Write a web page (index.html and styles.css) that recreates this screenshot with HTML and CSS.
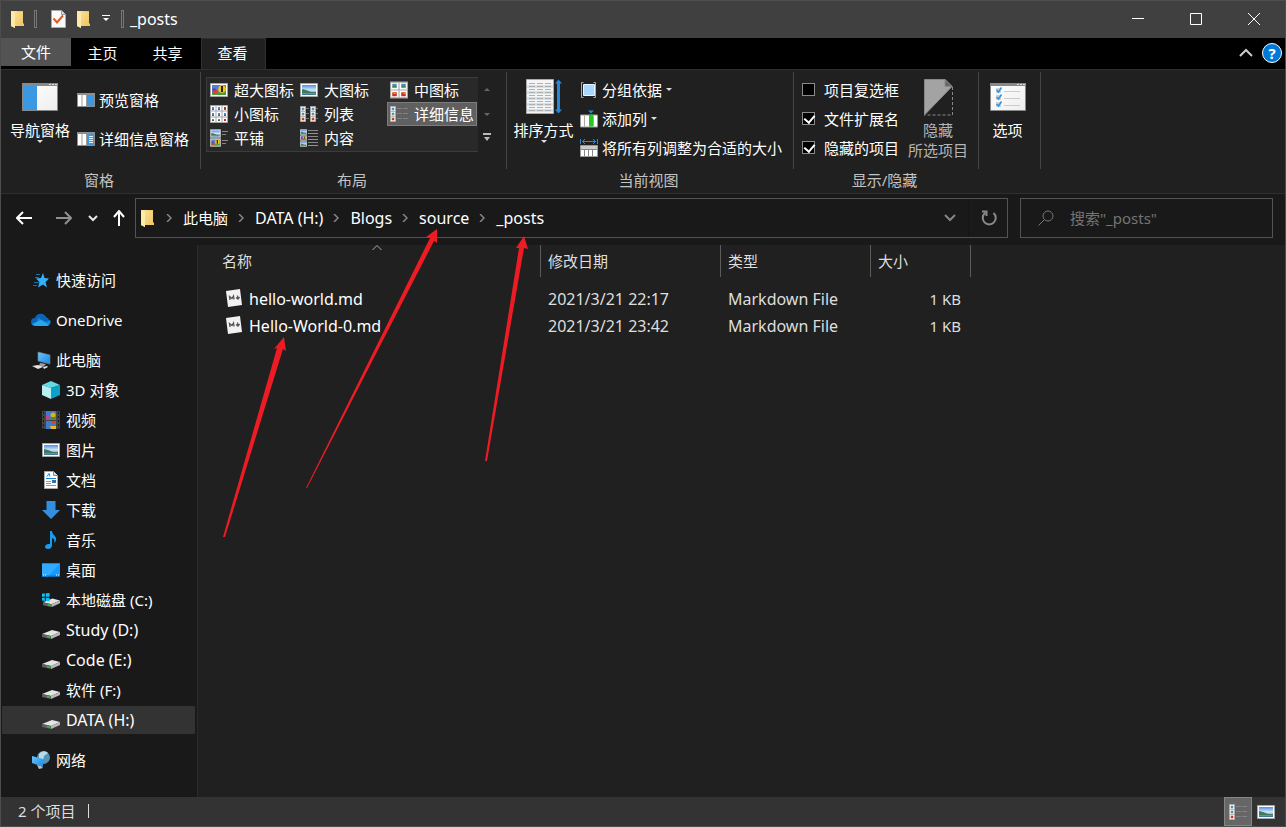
FILE: index.html
```html
<!DOCTYPE html>
<html lang="zh-CN">
<head>
<meta charset="utf-8">
<title>_posts</title>
<link rel="stylesheet" href="styles.css">
</head>
<body>
<svg class="sprite" aria-hidden="true">
  <defs>
    <linearGradient id="g-fold" x1="0" y1="0" x2="1" y2="1"><stop offset="0" stop-color="#fbe6a2"/><stop offset="1" stop-color="#efc25c"/></linearGradient>
    <linearGradient id="g-blue" x1="0" y1="0" x2="1" y2="1"><stop offset="0" stop-color="#6dc4fb"/><stop offset="1" stop-color="#168ae6"/></linearGradient>
    <linearGradient id="g-pic" x1="0" y1="0" x2="0" y2="1"><stop offset="0" stop-color="#4f8fe8"/><stop offset=".5" stop-color="#cfe8f5"/><stop offset="1" stop-color="#2f6f8c"/></linearGradient>
    <linearGradient id="g-paper" x1="0" y1="0" x2="1" y2="1"><stop offset="0" stop-color="#fff"/><stop offset="1" stop-color="#eee"/></linearGradient>
  </defs>
  <symbol id="folder" viewBox="0 0 13 18"><path d="M5 1h7v12l1 1v2H5z" fill="#f0c860"/><path d="M0 1h6.500v1H12v14H4V18L0 16z" fill="url(#g-fold)"/><path d="M0 1l4 2v15l-4-2z" fill="#ffe9a9"/></symbol>
  <symbol id="props" viewBox="0 0 15 18"><path d="M.5.500h10l4 4v13H.500z" fill="#fafafa" stroke="#a8a8a8"/><path d="M10.500.5v4h4" fill="#ddd" stroke="#999"/><path d="M2.500 8.500l3.500 4 6-7" fill="none" stroke="#e8571c" stroke-width="2"/></symbol>
  <symbol id="pane-l" viewBox="0 0 36 28"><path d="M.5.500h35v27H.500z" fill="url(#g-paper)" stroke="#85898c"/><path d="M0 0h36v3H0z" fill="#85898c"/><path d="M27 1h2v1h-2zm3 0h2v1h-2zm3 0h2v1h-2z" fill="#ddd"/><path d="M1 3h14v24H1z" fill="#3b98e2"/></symbol>
  <symbol id="preview" viewBox="0 0 18 14"><path d="M.5.500h17v13H.500z" fill="#fff" stroke="#8b8f92"/><path d="M0 0h18v2H0z" fill="#8b8f92"/><path d="M5 2v11M9.500 2v11" stroke="#999"/><path d="M10 2h7v11h-7z" fill="#3b98e2"/></symbol>
  <symbol id="detailpane" viewBox="0 0 18 14"><use href="#preview"/><path d="M12 4.500h4M12 6.500h4M12 8.500h4M12 10.500h4" stroke="#e5f3ff"/></symbol>
  <symbol id="scene" viewBox="0 0 18 14"><path d="M.5.500h17v13H.500z" fill="#fff" stroke="#a6a6a6"/><path d="M2 2h14v10H2z" fill="url(#g-pic)"/><path d="M2 6l4 1 5 2h5v1H2z" fill="#43775f"/></symbol>
  <symbol id="flower" viewBox="0 0 18 14"><path d="M.5.500h17v13H.500z" fill="#fff" stroke="#a6a6a6"/><path d="M2 2h14v10H2z" fill="#4c83dc"/><path d="M2 10l14-1v3H2z" fill="#4f9b36"/><circle cx="12" cy="6" r="3.800" fill="#f6c710"/><path d="M11 3h2v6h-2z" fill="#37220c"/><circle cx="5" cy="8.500" r="2.500" fill="#dc422a"/><path d="M2.500 5.500h3v2h-3z" fill="#5b3cb1"/></symbol>
  <symbol id="tile" viewBox="0 0 7 7"><path d="M.5.500h6v6h-6z" fill="#fff" stroke="#aaa"/><path d="M2 2h3v2H2z" fill="#4a8ad4"/><path d="M2 4h3v1H2z" fill="#31724b"/></symbol>
  <symbol id="tile-r" viewBox="0 0 7 7"><path d="M.5.500h6v6h-6z" fill="#fff" stroke="#aaa"/><path d="M2 2h3v3H2z" fill="#c93218"/><path d="M2 2h1v1H2z" fill="#efa326"/></symbol>
  <symbol id="small" viewBox="0 0 18 18"><path d="M.5.500h17v17H.500z" fill="#fff" stroke="#a6a6a6"/><path d="M6 1v16m6-16v16M1 6h16M1 12h16" stroke="#a6a6a6"/><path d="M2 2h2v2H2zm6 0h2v2H8zm0 6h2v2H8zm6 0h2v2h-2zM2 8h2v2H2zm0 6h2v1H2zm6 0h2v1H8z" fill="#4a8ad4"/><path d="M2 4h2v1H2zm6 0h2v1H8zm-6 6h2v1H2zm6 0h2v1H8zm6 0h2v1h-2zM2 15h2v1H2zm6 0h2v1H8z" fill="#31724b"/><path d="M14 2h2v3h-2zm0 12h2v2h-2z" fill="#c93218"/></symbol>
  <symbol id="medium" viewBox="0 0 16 15"><path d="M.5.500h15v14H.500z" fill="#fff" stroke="#a6a6a6"/><path d="M8 1v13M1 7.500h14" stroke="#a6a6a6"/><path d="M2 2h4v2H2zm8 0h4v2h-4z" fill="#4a8ad4"/><path d="M2 4h4v1.500H2zm8 0h4v1.500h-4z" fill="#3c8450"/><path d="M2 9.500h4V13H2zm8 0h4V13h-4z" fill="#c93218"/><path d="M3 10h2v1H3zm9 0h2v1h-2z" fill="#efa326"/></symbol>
  <symbol id="list" viewBox="0 0 18 16"><use href="#tile" width="6" height="6"/><use href="#tile" y="5" width="6" height="6"/><use href="#tile-r" y="10" width="6" height="6"/><use href="#tile" x="10" width="6" height="6"/><use href="#tile" x="10" y="5" width="6" height="6"/><use href="#tile-r" x="10" y="10" width="6" height="6"/><path d="M6 2.500h3m-3 5h3m-3 5h3m7-10h2m-2 5h2m-2 5h2" stroke="#777"/></symbol>
  <symbol id="details" viewBox="0 0 18 16"><use href="#tile" width="6" height="6"/><use href="#tile" y="5" width="6" height="6"/><use href="#tile-r" y="10" width="6" height="6"/><path d="M7 2.500h5m1 0h5m-11 5h5m1 0h5m-11 5h5m1 0h5" stroke="#828282"/></symbol>
  <symbol id="tiles" viewBox="0 0 18 18"><use href="#scene" width="11" height="9"/><use href="#flower" y="9" width="11" height="9"/><path d="M12 2.500h6m-6 3h4m-4 6h6m-6 3h4" stroke="#888"/></symbol>
  <symbol id="content" viewBox="0 0 18 18"><use href="#scene" width="7" height="6"/><use href="#flower" y="6" width="7" height="6"/><use href="#scene" y="12" width="7" height="6"/><path d="M8 1.500h10m-10 6h10m-10 6h10" stroke="#888"/><path d="M8 4.500h10m-10 6h10m-10 6h10" stroke="#5b9df0"/></symbol>
  <symbol id="sort" viewBox="0 0 36 36"><path d="M.5.500h27v34H.500z" fill="#f5f5f5" stroke="#aaa"/><path d="M1 6h26v3H1zm0 6h26v3H1zm0 6h26v3H1zm0 6h26v3H1zm0 6h26v3H1z" fill="#c4e5f7"/><path d="M3 4.500h22M3 7.500h22M3 10.500h22M3 13.500h22M3 16.500h22M3 19.500h22M3 22.500h22M3 25.500h22M3 28.500h22M3 31.500h22" stroke="#b0b0b0" stroke-dasharray="6 2"/><path d="M31 3h3v29h-3z" fill="#2488dc"/><path d="M29 4.500l3.500-4 3.500 4zm0 26l3.500 4 3.500-4z" fill="#2488dc"/></symbol>
  <symbol id="group" viewBox="0 0 18 16"><path d="M3.500.5h-2v15h2m10-15h2v15h-2" fill="none" stroke="#aaa"/><path d="M3.500 2.500h11v11h-11z" fill="#a9d7fb" stroke="#eaf6ff"/></symbol>
  <symbol id="addcol" viewBox="0 0 18 17"><path d="M.5 4.500h17v12H.500z" fill="#fff" stroke="#999"/><path d="M4.500 5v11m9-11v11" stroke="#aaa"/><path d="M9 4h4v12H9z" fill="#20c820"/><path d="M8 0h6l-3 3z" fill="#2488dc"/></symbol>
  <symbol id="fitcol" viewBox="0 0 18 18"><path d="M.5 0v5m17-5v5M2 2.500h14M5 0L2.500 2.500 5 5m8-5l2.500 2.500L13 5" stroke="#2488dc" fill="none"/><path d="M.5 6.500h17v11H.500z" fill="#fff" stroke="#999"/><path d="M1 7h16v3H1z" fill="#ccc"/><path d="M1 10.500h16M4.500 11v6m4-6v6m4-6v6" stroke="#888"/></symbol>
  <symbol id="hide" viewBox="0 0 29 37"><path d="M.5 36V.500h20.500l7 7z" fill="#a3a3a3" stroke="#888"/><path d="M21 .500v7h7z" fill="#666" stroke="#888"/><path d="M28.500 8v28H0" fill="none" stroke="#888" stroke-dasharray="3 2"/></symbol>
  <symbol id="options" viewBox="0 0 36 28"><path d="M.5.500h35v27H.500z" fill="url(#g-paper)" stroke="#85898c"/><path d="M0 0h36v3H0z" fill="#85898c"/><path d="M27 1h2v1h-2zm3 0h2v1h-2zm3 0h2v1h-2z" fill="#ddd"/><path d="M6 5h5v5H6zm0 7h5v5H6zm0 7h5v5H6z" fill="#d2d2d2"/><path d="M6.500 7l2 2 3-4.500m-5 9.500l2 2 3-4.500m-5 9.500l2 2 3-4.500" fill="none" stroke="#2e92e2" stroke-width="1.500"/><path d="M14 8.500h16m-16 7h16m-16 7h16" stroke="#ccc"/></symbol>
  <symbol id="star" viewBox="0 0 20 18"><path d="M12 2l1.500 5 4.500.5-3.500 3.500 1.500 5.500L12 13.500 7 16.500 8.500 11 5 7.500l5-.5z" fill="#35b1fc"/><path d="M5 3.500h4M4 6.500h4M3 11.500h5M2 14.500h4" stroke="#1673ad"/></symbol>
  <symbol id="cloud" viewBox="0 0 20 14"><path d="M4 13a4 4 0 0 1 0-8A6 6 0 0 1 15 4a5 5 0 0 1 1 9z" fill="#0a64b8"/><path d="M7 5l8 4 4-2a4 4 0 0 1-3 6H5z" fill="#1688dc"/><path d="M1 11l9-4 8 5-2 1H4z" fill="#2aa6f0"/></symbol>
  <symbol id="pc" viewBox="0 0 20 18"><path d="M7 1l12 3v9L7 10z" fill="url(#g-blue)" stroke="#79828a" stroke-width=".6"/><path d="M9 12l6 1-3 3-4-1z" fill="#9da1a6"/><path d="M1 15l6-1 5 2-5 2z" fill="#e1e3e5"/><path d="M12 16l4-1 1 1-4 2z" fill="#e1e3e5"/></symbol>
  <symbol id="cube" viewBox="0 0 18 18"><path d="M0 4l9-4 9 4-9 3z" fill="#63dbe5"/><path d="M0 4l9 3v11l-9-4z" fill="#b8f0f2"/><path d="M18 4L9 7v11l9-4z" fill="#09a2ca"/></symbol>
  <symbol id="video" viewBox="0 0 18 18"><path d="M0 0h18v18H0z" fill="#444"/><path d="M4 0h10v9H4zm0 10h10v8H4z" fill="#3d7ad3"/><path d="M4 5h4v3H4z" fill="#b54b8b"/><circle cx="11" cy="4" r="2.500" fill="#d9b31a"/><path d="M8 15h6v3H9z" fill="#efb71c"/><path d="M8 6h5v3H9z" fill="#4b8c3c"/><path d="M10 10h3v2h-3z" fill="#c4452b"/><path d="M1.500 1v17m15-17v17" stroke="#1a1a1a" stroke-dasharray="2 2"/></symbol>
  <symbol id="doc" viewBox="0 0 14 18"><path d="M.5.500h9l4 4v13H.500z" fill="#fff" stroke="#aaa"/><path d="M9.500.5v4h4" fill="#ddd" stroke="#888"/><path d="M3 5.500l2-3 1 3M2 7.500h10" stroke="#1684d8" fill="none"/><path d="M2 10.500h5m-5 2h5m-5 2h10" stroke="#999"/><path d="M8 9h4v3H8z" fill="#3270a9"/></symbol>
  <symbol id="down" viewBox="0 0 16 16"><path d="M4 0h8v8h4l-8 8-8-8h4z" fill="#338fe0"/></symbol>
  <symbol id="note" viewBox="0 0 12 18"><path d="M5 0h2c0 4 5 5 4 9-.5 2-1 2.500-2 3 1-3 .5-4-2-5v7c0 3-2 4-4 4-4 0-4-4 0-5h2z" fill="#149df5"/></symbol>
  <symbol id="desk" viewBox="0 0 18 13"><path d="M0 0h18v13H0z" fill="#159aff"/><path d="M0 0h18L6 13H0z" fill="#31aaff"/><path d="M0 12h18v1H0z" fill="#0877d0"/><path d="M1 11.500h3m10 0h3" stroke="#fff" stroke-dasharray="1 1"/></symbol>
  <symbol id="drive" viewBox="0 0 18 10"><path d="M0 5l10-4 8 2-9 4z" fill="#e4e4e4"/><path d="M0 5l9 2v3L0 8z" fill="#5d6261"/><path d="M9 7l9-4v3L9 10z" fill="#b9b9b9"/><path d="M5 7.500l3 .8" stroke="#27cc27" stroke-width="1.500"/></symbol>
  <symbol id="sysdrive" viewBox="0 0 19 15"><use href="#drive" x="1" y="5" width="18" height="10"/><path d="M0 1l3-.5V4H0zm4-.7L8 0v4H4zM0 5h3v3.500L0 8zm4 0h4v4l-4-.5z" fill="#12bdf2"/></symbol>
  <symbol id="net" viewBox="0 0 18 18"><circle cx="11.500" cy="6.500" r="6.500" fill="#5594b4"/><path d="M7 3c3-4 7-3 9-1l-4 3-1 4-4-2z" fill="#b5dce9"/><path d="M0 5l11 3v8L0 12z" fill="url(#g-blue)"/><path d="M5 14l4 1 2 2-4 1z" fill="#bbb"/></symbol>
  <symbol id="md" viewBox="0 0 17 19"><path d="M0 2l14-2 2 16-14 2z" fill="#f2f2f2"/><path d="M4 11l-.5-3.500L6 9.500l1.500-2.500.5 3.500M11.500 6.500l.5 3.500m-2-1.500l2 1.500 1.500-2" fill="none" stroke="#555" stroke-width="1.300"/></symbol>
  <symbol id="caret" viewBox="0 0 6 3"><path d="M0 0h6L3 3z" fill="currentColor"/></symbol>
  <symbol id="sep" viewBox="0 0 6 8"><path d="M1 0l4 4-4 4" fill="none" stroke="#868686" stroke-width="1.500"/></symbol>
</svg>

<div class="window">
  <header class="titlebar">
    <svg class="i13"><use href="#folder"/></svg>
    <span class="tick"></span>
    <button class="qat" aria-label="属性"><svg class="i-props"><use href="#props"/></svg></button>
    <button class="qat qat-folder" aria-label="新建文件夹"><svg class="i13"><use href="#folder"/></svg></button>
    <button class="qat" aria-label="自定义快速访问工具栏"><svg class="i-more" viewBox="0 0 8 7"><path d="M0 .5h8" stroke="#fff"/><path d="M1 3h6L4 6z" fill="#fff"/></svg></button>
    <span class="tick tick-end"></span>
    <h1 class="title">_posts</h1>
    <div class="winbtns">
      <button aria-label="最小化"><svg viewBox="0 0 12 12"><path d="M0 5.500h12"/></svg></button>
      <button aria-label="最大化"><svg viewBox="0 0 12 12"><path d="M.5.500h11v11H.500z"/></svg></button>
      <button aria-label="关闭"><svg viewBox="0 0 12 12"><path d="M0 0l12 12M12 0L0 12"/></svg></button>
    </div>
  </header>

  <nav class="tabs">
    <button class="tab tab-file">文件</button>
    <button class="tab">主页</button>
    <button class="tab">共享</button>
    <button class="tab tab-active">查看</button>
    <div class="tabs-end">
      <button aria-label="折叠功能区"><svg class="i-fold" viewBox="0 0 14 9"><path d="M1 8l6-6 6 6" fill="none" stroke="#ccc" stroke-width="2"/></svg></button>
      <button class="help" aria-label="帮助">?</button>
    </div>
  </nav>

  <section class="ribbon">
    <div class="group g-panes">
      <div class="group-body">
        <button class="big"><svg class="i-pane"><use href="#pane-l"/></svg><span>导航窗格</span><svg class="caret"><use href="#caret"/></svg></button>
        <div class="stack stack-panes">
          <button class="cmd"><svg class="i-18x14"><use href="#preview"/></svg>预览窗格</button>
          <button class="cmd"><svg class="i-18x14"><use href="#detailpane"/></svg>详细信息窗格</button>
        </div>
      </div>
      <h2>窗格</h2>
    </div>
    <div class="group g-layout">
      <div class="group-body">
        <div class="gallery">
          <button><svg class="i18"><use href="#flower"/></svg>超大图标</button>
          <button><svg class="i18"><use href="#scene"/></svg>大图标</button>
          <button><svg class="i18"><use href="#medium"/></svg>中图标</button>
          <button><svg class="i18"><use href="#small"/></svg>小图标</button>
          <button><svg class="i18"><use href="#list"/></svg>列表</button>
          <button class="picked"><svg class="i18"><use href="#details"/></svg>详细信息</button>
          <button><svg class="i18"><use href="#tiles"/></svg>平铺</button>
          <button><svg class="i18"><use href="#content"/></svg>内容</button>
        </div>
        <div class="gallery-scroll">
          <button aria-label="上一行"><svg class="caret up"><use href="#caret"/></svg></button>
          <button aria-label="下一行"><svg class="caret"><use href="#caret"/></svg></button>
          <button class="more" aria-label="更多"><svg class="i-expand" viewBox="0 0 8 8"><path d="M0 1h8" stroke="currentColor" stroke-width="2"/><path d="M1 4h6L4 8z" fill="currentColor"/></svg></button>
        </div>
      </div>
      <h2>布局</h2>
    </div>
    <div class="group g-view">
      <div class="group-body">
        <button class="big big-sort"><svg class="i-36"><use href="#sort"/></svg><span>排序方式</span><svg class="caret"><use href="#caret"/></svg></button>
        <div class="stack">
          <button class="cmd"><svg class="i18"><use href="#group"/></svg>分组依据<svg class="caret"><use href="#caret"/></svg></button>
          <button class="cmd"><svg class="i18"><use href="#addcol"/></svg>添加列<svg class="caret"><use href="#caret"/></svg></button>
          <button class="cmd"><svg class="i18"><use href="#fitcol"/></svg>将所有列调整为合适的大小</button>
        </div>
      </div>
      <h2>当前视图</h2>
    </div>
    <div class="group g-show">
      <div class="group-body">
        <div class="stack">
          <label class="check"><input type="checkbox">项目复选框</label>
          <label class="check"><input type="checkbox" checked>文件扩展名</label>
          <label class="check"><input type="checkbox" checked>隐藏的项目</label>
        </div>
        <button class="big big-hide" disabled><svg class="i-hide"><use href="#hide"/></svg><span>隐藏<br>所选项目</span></button>
      </div>
      <h2>显示/隐藏</h2>
    </div>
    <div class="group g-options">
      <div class="group-body">
        <button class="big"><svg class="i-pane"><use href="#options"/></svg><span>选项</span></button>
      </div>
    </div>
  </section>

  <div class="navbar">
    <div class="history">
      <button aria-label="后退"><svg class="i16" viewBox="0 0 16 16"><path d="M16 8H1m6-6L1 8l6 6" stroke="#fff"/></svg></button>
      <button aria-label="前进"><svg class="i16" viewBox="0 0 16 16"><path d="M0 8h15M9 2l6 6-6 6" stroke="#909090"/></svg></button>
      <button aria-label="最近位置"><svg class="i-chev" viewBox="0 0 10 8"><path d="M1 2l4 4 4-4" stroke="#e8e8e8"/></svg></button>
      <button aria-label="上移"><svg class="i-up" viewBox="0 0 12 16"><path d="M6 16V1M1 7l5-6 5 6" stroke="#fff"/></svg></button>
    </div>
    <div class="address">
      <svg class="i13"><use href="#folder"/></svg>
      <svg class="sep"><use href="#sep"/></svg><a href="#">此电脑</a>
      <svg class="sep"><use href="#sep"/></svg><a class="latin" href="#">DATA (H:)</a>
      <svg class="sep"><use href="#sep"/></svg><a class="latin" href="#">Blogs</a>
      <svg class="sep"><use href="#sep"/></svg><a class="latin" href="#">source</a>
      <svg class="sep"><use href="#sep"/></svg><a class="latin" href="#">_posts</a>
      <button class="drop" aria-label="以前的位置"><svg class="i-drop" viewBox="0 0 12 8"><path d="M1 1l5 5 5-5" stroke="#858585"/></svg></button>
      <button class="refresh" aria-label="刷新"><svg class="i16" viewBox="0 0 16 16"><path d="M12.500 3A6.500 6.500 0 1 1 4 3M1 1.500h4.500V6" stroke="#8a8a8a"/></svg></button>
    </div>
    <label class="search">
      <svg class="i16" viewBox="0 0 16 16"><circle cx="10" cy="6" r="5" /><path d="M6.500 9.500L.5 15.500"/></svg>
      <input type="text" placeholder="搜索&quot;_posts&quot;" aria-label="搜索">
    </label>
  </div>

  <main class="body">
    <nav class="tree">
      <a class="root" href="#"><svg class="ti"><use href="#star"/></svg>快速访问</a>
      <a class="root" href="#"><svg class="ti"><use href="#cloud"/></svg>OneDrive</a>
      <a class="root" href="#"><svg class="ti"><use href="#pc"/></svg>此电脑</a>
      <a href="#"><svg class="ti"><use href="#cube"/></svg>3D 对象</a>
      <a href="#"><svg class="ti"><use href="#video"/></svg>视频</a>
      <a href="#"><svg class="ti"><use href="#scene"/></svg>图片</a>
      <a href="#"><svg class="ti"><use href="#doc"/></svg>文档</a>
      <a href="#"><svg class="ti"><use href="#down"/></svg>下载</a>
      <a href="#"><svg class="ti"><use href="#note"/></svg>音乐</a>
      <a href="#"><svg class="ti"><use href="#desk"/></svg>桌面</a>
      <a href="#"><svg class="ti"><use href="#sysdrive"/></svg>本地磁盘 (C:)</a>
      <a class="latin" href="#"><svg class="ti low"><use href="#drive"/></svg>Study (D:)</a>
      <a class="latin" href="#"><svg class="ti low"><use href="#drive"/></svg>Code (E:)</a>
      <a href="#"><svg class="ti low"><use href="#drive"/></svg>软件 (F:)</a>
      <a class="latin current" href="#"><svg class="ti low"><use href="#drive"/></svg>DATA (H:)</a>
      <a class="root" href="#"><svg class="ti"><use href="#net"/></svg>网络</a>
    </nav>
    <section class="files">
      <table>
        <thead>
          <tr><th class="c-name">名称<svg class="sorted" viewBox="0 0 10 6"><path d="M.5 5L5 .500 9.500 5" fill="none" stroke="#aaa"/></svg></th><th class="c-date">修改日期</th><th class="c-type">类型</th><th class="c-size">大小</th></tr>
        </thead>
        <tbody>
          <tr><td class="latin"><span class="file"><svg class="i-md"><use href="#md"/></svg>hello-world.md</span></td><td class="latin">2021/3/21 22:17</td><td class="latin">Markdown File</td><td class="num">1 KB</td></tr>
          <tr><td class="latin"><span class="file"><svg class="i-md"><use href="#md"/></svg>Hello-World-0.md</span></td><td class="latin">2021/3/21 23:42</td><td class="latin">Markdown File</td><td class="num">1 KB</td></tr>
        </tbody>
      </table>
    </section>
  </main>

  <footer class="status">
    <span class="count">2 个项目</span>
    <button class="mode mode-on" aria-label="详细信息"><svg class="i18"><use href="#details"/></svg></button>
    <button class="mode" aria-label="大图标"><svg class="i18"><use href="#scene"/></svg></button>
  </footer>

  <svg class="marks" viewBox="0 0 700 600" aria-hidden="true">
    <path d="M223 537L277 348 274 349 284 337 286 351 283 349 225 537z"/>
    <path d="M306 488L430 238 426 237 437 229 437 243 434 241 307 488z"/>
    <path d="M485 461L519 248 516 248 524 236 528 249 524 248 487 461z"/>
  </svg>
</div>
</body>
</html>
```

FILE: styles.css
```css
* { box-sizing: border-box; }

body {
  margin: 0;
  background: #191919;
  color: #fff;
  font: 15px/20px "Noto Sans", "Noto Sans CJK SC", sans-serif;
}

button {
  margin: 0;
  padding: 0;
  border: 0;
  background: none;
  color: inherit;
  font: inherit;
  white-space: nowrap;
}

a { color: inherit; text-decoration: none; white-space: nowrap; }
svg { display: block; flex: none; }
.sprite { position: absolute; width: 0; height: 0; }
.latin { font-size: 16px; }

.window {
  position: relative;
  display: flex;
  flex-direction: column;
  min-height: 100vh;
  border: 1px solid #4d4d4d;
}

/* Icon sizes */
.i13 { width: 13px; height: 18px; }
.i16 { width: 16px; height: 16px; fill: none; stroke-width: 2; }
.i18 { width: 18px; height: 18px; }
.i-18x14 { width: 18px; height: 14px; }
.i-pane { width: 36px; height: 28px; }
.i-36 { width: 36px; height: 36px; }
.i-hide { width: 29px; height: 37px; }
.i-props { width: 15px; height: 18px; }
.i-more { width: 8px; height: 7px; }
.i-fold { width: 14px; height: 9px; }
.i-expand { width: 8px; height: 8px; }
.i-md { width: 17px; height: 19px; }
.i-chev { width: 10px; height: 8px; fill: none; stroke-width: 2; }
.i-drop { width: 12px; height: 8px; fill: none; stroke-width: 2; }
.i-up { width: 12px; height: 16px; fill: none; stroke-width: 2; }
.caret { width: 6px; height: 3px; color: #ddd; }

/* Title bar */
.titlebar {
  display: flex;
  align-items: center;
  height: 37px;
  padding: 0 2px 2px 10px;
  background: #404040;
}
.tick { width: 3px; height: 18px; margin-left: 10px; border: 1px solid #777; }
.qat { margin-left: 12px; }
.qat:nth-of-type(1) { margin-left: 14px; }
.qat-folder { margin-left: 11px; }
.tick-end { margin-left: 11px; }
.title { margin: 0 0 0 6px; font-size: 16px; font-weight: 400; }
.winbtns { display: flex; margin-left: auto; }
.winbtns button { display: flex; justify-content: center; width: 58px; padding: 11px 0; }
.winbtns svg { width: 12px; height: 12px; fill: none; stroke: #fff; }

/* Ribbon tabs */
.tabs { display: flex; height: 31px; background: #000; }
.tab { width: 65px; padding: 0 2px 2px 0; }
.tab-file { width: 70px; height: 28px; padding: 0; background: #535353; }
.tab-active { width: 65px; border: 1px solid #2f2f2f; border-bottom: 0; background: #202020; }
.tabs-end { display: flex; align-items: center; gap: 9px; margin-left: auto; padding: 0 3px 2px 0; }
.help {
  width: 20px;
  height: 20px;
  border: 1px solid #fff;
  border-radius: 50%;
  background: #0078d7;
  font-weight: 700;
  line-height: 18px;
}

/* Ribbon */
.ribbon {
  display: flex;
  height: 125px;
  padding-top: 2px;
  border-top: 1px solid #2f2f2f;
  border-bottom: 1px solid #2f2f2f;
  background: #202020;
}
.group { display: flex; flex-direction: column; }
.group-body { display: flex; height: 97px; border-right: 1px solid #454545; }
.group h2 {
  margin: 0;
  padding-right: 4px;
  color: #c3c3c3;
  font-size: 15px;
  font-weight: 400;
  line-height: 22px;
  text-align: center;
}
.g-panes { width: 200px; }
.g-layout { width: 306px; }
.g-view { width: 287px; }
.g-show { width: 185px; }
.g-options { width: 62px; }

.big { display: flex; flex-direction: column; align-items: center; padding-top: 11px; }
.big span { margin-top: 9px; }
.g-panes .big { width: 76px; padding-left: 2px; }
.big-sort { width: 73px; padding-top: 7px; }
.big-sort span { margin-top: 5px; }
.big-hide { width: 78px; padding-top: 7px; color: #b5b5b5; }
.big-hide span { margin-top: 4px; }
.g-options .big { width: 57px; }

.stack { display: flex; flex-direction: column; padding-top: 3px; }
.stack-panes { gap: 10px; padding-top: 13px; }
.cmd { display: flex; align-items: center; gap: 4px; height: 29px; }

.gallery {
  display: grid;
  grid-template-columns: repeat(3, 90px);
  grid-auto-rows: 24px;
  width: 272px;
  height: 75px;
  margin: 5px 0 0 5px;
  border: 1px solid #3c3c3c;
  border-right: 0;
  background: #292929;
}
.gallery button { display: flex; align-items: center; gap: 6px; padding-left: 3px; }
.gallery .picked { padding-left: 2px; border: 1px solid #7c7c7c; background: #606060; }
.gallery-scroll { display: flex; flex-direction: column; width: 18px; margin-top: 5px; }
.gallery-scroll button { display: flex; align-items: center; justify-content: center; height: 25px; }
.gallery-scroll .caret { color: #666; }
.gallery-scroll .more { height: 20px; color: #bbb; }
.up { transform: rotate(180deg); }

.g-show .stack { padding-left: 8px; }
.check { display: flex; align-items: center; gap: 9px; height: 29px; white-space: nowrap; }
.check input {
  appearance: none;
  width: 13px;
  height: 13px;
  margin: 0;
  border: 1px solid #8b8b8b;
  background: #000;
}
.check input:checked::after {
  content: "";
  display: block;
  width: 5px;
  height: 8px;
  margin: 0 0 0 3px;
  border: solid #fff;
  border-width: 0 2px 2px 0;
  transform: rotate(40deg);
}

/* Address row */
.navbar { display: flex; align-items: center; height: 51px; padding: 0 12px 3px 15px; background: #191919; }
.history { display: flex; align-items: center; width: 119px; }
.history button + button { margin-left: 24px; }
.history button:nth-child(3) { margin-left: 16px; }
.history button:nth-child(4) { margin-left: 15px; }
.address { display: flex; align-items: center; flex: 1; height: 40px; padding-left: 5px; border: 1px solid #535353; }
.sep { width: 6px; height: 8px; margin: 0 11px 0 10px; }
.address .i13 { margin-right: 2px; }
.drop { margin-left: auto; padding: 0 12px; }
.refresh { display: flex; align-items: center; align-self: stretch; padding: 0 10px 0 12px; border-left: 1px solid #141414; }
.search { display: flex; align-items: center; gap: 16px; width: 253px; height: 40px; margin-left: 12px; padding-left: 17px; border: 1px solid #535353; }
.search svg { stroke: #777; stroke-width: 1; }
.search input { flex: 1; min-width: 0; padding: 0; border: 0; outline: 0; background: none; color: #fff; font: inherit; }
.search input::placeholder { color: #747474; opacity: 1; }

/* Body */
.body { display: flex; flex: 1; }
.tree { display: flex; flex-direction: column; gap: 2px; width: 197px; padding: 11px 2px 0 1px; border-right: 1px solid #2b2b2b; background: #191919; }
.tree a { display: flex; align-items: center; gap: 6px; height: 28px; padding-left: 40px; }
.tree .root { gap: 5px; margin-top: 10px; padding-left: 29px; }
.tree .current { background: #333; }
.ti { width: 18px; height: 18px; }
.root .ti { width: 20px; }
.low { height: 10px; align-self: flex-end; margin-bottom: 5px; }

.files { flex: 1; background: #202020; }
table { border-collapse: separate; border-spacing: 0; table-layout: fixed; width: 773px; }
th { position: relative; height: 32px; padding: 0 0 0 7px; border-right: 1px solid #5c5c5c; color: #dedede; font-weight: 400; text-align: left; }
th:first-child { padding-left: 24px; }
.c-name { width: 343px; }
.c-date { width: 180px; }
.c-type { width: 150px; }
.c-size { width: 100px; }
.sorted { position: absolute; top: 0; left: 174px; width: 10px; height: 6px; }
td { height: 27px; padding: 0 0 0 7px; color: #dedede; }
td:first-child { padding-left: 28px; color: #fff; }
tbody::before { content: ""; display: block; height: 8px; }
.file { display: flex; align-items: center; gap: 6px; }
td.num { padding-right: 10px; text-align: right; }

/* Status bar */
.status { display: flex; align-items: center; height: 29px; padding: 0 5px 0 17px; background: #333; }
.count { margin: 0 auto 2px 0; padding-right: 13px; border-right: 1px solid #ddd; color: #dedede; line-height: 14px; }
.mode { display: flex; align-items: center; justify-content: center; width: 28px; height: 29px; }
.mode-on { border: 1px solid #858585; background: #666; }

/* Hand-drawn arrows over the window */
.marks { position: absolute; top: -1px; left: -1px; width: 700px; height: 600px; fill: #ed1c24; pointer-events: none; }
```
